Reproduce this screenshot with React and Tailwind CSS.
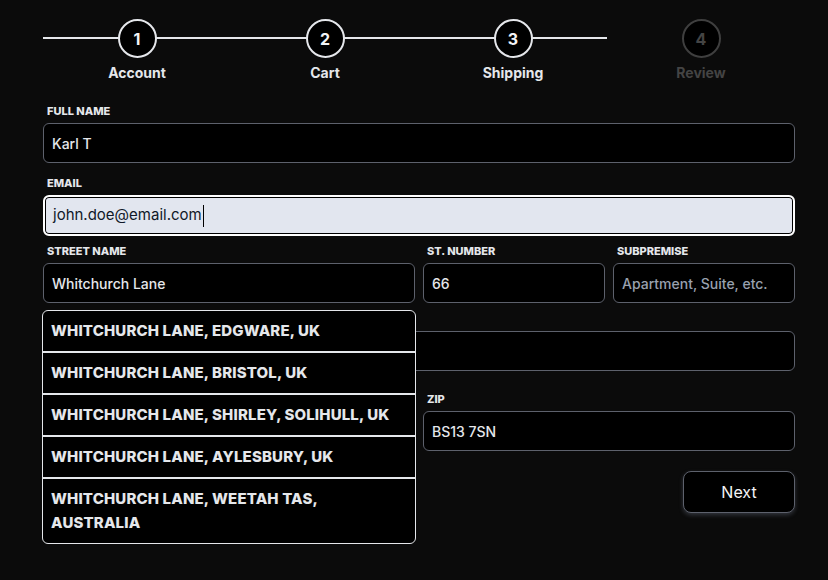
import React from "react";

const steps = [
  { n: 1, label: "Account", done: true },
  { n: 2, label: "Cart", done: true },
  { n: 3, label: "Shipping", done: true },
  { n: 4, label: "Review", done: false },
];

const suggestions = [
  "Whitchurch Lane, Edgware, UK",
  "Whitchurch Lane, Bristol, UK",
  "Whitchurch Lane, Shirley, Solihull, UK",
  "Whitchurch Lane, Aylesbury, UK",
  "Whitchurch Lane, Weetah TAS, Australia",
];

function Label({ children }) {
  return (
    <div className="text-[11px] leading-[14px] font-extrabold uppercase text-gray-200 pl-[4px] mb-[5px]">
      {children}
    </div>
  );
}

function Field({ value, placeholder }) {
  return (
    <div className="h-10 rounded-md border border-[#5d616c] bg-black flex items-center px-2 text-[14px] font-medium">
      {value ? (
        <span className="text-gray-200">{value}</span>
      ) : (
        <span className="text-gray-400">{placeholder}</span>
      )}
    </div>
  );
}

function Stepper() {
  return (
    <div className="grid grid-cols-4">
      {steps.map((s, i) => (
        <div key={s.n} className="flex flex-col items-center">
          <div className="relative w-full h-[39px] flex justify-center">
            {i < 3 ? (
              <div className="absolute left-0 right-0 top-[18px] h-[2px] bg-gray-200" />
            ) : null}
            <div
              className={`relative w-[39px] h-[39px] rounded-full border-2 bg-black flex items-center justify-center text-[16px] font-bold ${
                s.done ? "border-gray-200 text-gray-100" : "border-[#3f3f3f] text-[#444]"
              }`}
            >
              {s.n}
            </div>
          </div>
          <div
            className={`mt-[4px] text-[14px] font-bold ${
              s.done ? "text-gray-200" : "text-[#444]"
            }`}
          >
            {s.label}
          </div>
        </div>
      ))}
    </div>
  );
}

export default function App() {
  return (
    <div
      className="w-[828px] h-[580px] bg-[#0b0b0b] overflow-hidden"
      style={{ fontFamily: "Inter, 'Noto Sans', sans-serif" }}
    >
      <div className="ml-[43px] w-[752px] pt-[19px]">
        <Stepper />

        <div className="mt-[21px]">
          <Label>Full name</Label>
          <Field value="Karl T" />
        </div>

        <div className="mt-[13px]">
          <Label>Email</Label>
          <div className="h-[41px] rounded-md border-2 border-white bg-[#e2e6ef] shadow-[inset_0_0_0_1px_#000] flex items-center px-2 text-[15px] text-gray-900">
            john.doe@email.com
            <span className="inline-block w-[1px] h-[22px] bg-black ml-[1px]" />
          </div>
        </div>

        <div className="mt-[8px] grid grid-cols-[372px_182px_182px] gap-2">
          <div className="relative">
            <Label>Street name</Label>
            <Field value="Whitchurch Lane" />
            <div className="absolute left-[-1px] top-[66px] w-[374px] z-10 rounded-md border border-gray-200 bg-black overflow-hidden">
              {suggestions.map((s, i) => (
                <div
                  key={s}
                  className={`pl-2 pr-[20px] py-[8px] text-[15px] leading-[24px] tracking-[0.15px] font-extrabold uppercase text-gray-200 ${
                    i > 0 ? "border-t-2 border-gray-200" : ""
                  }`}
                >
                  {s}
                </div>
              ))}
            </div>
          </div>
          <div>
            <Label>St. number</Label>
            <Field value="66" />
          </div>
          <div>
            <Label>Subpremise</Label>
            <Field placeholder="Apartment, Suite, etc." />
          </div>
        </div>

        <div className="mt-[9px]">
          <Label>City</Label>
          <Field value="" placeholder="" />
        </div>

        <div className="mt-[21px] grid grid-cols-[372px_1fr] gap-2">
          <div>
            <Label>State</Label>
            <Field value="" placeholder="" />
          </div>
          <div>
            <Label>Zip</Label>
            <Field value="BS13 7SN" />
          </div>
        </div>

        <div className="mt-[20px] flex justify-end">
          <button className="w-[112px] h-[42px] rounded-lg border border-[#5d616c] bg-black text-gray-100 text-[16px] shadow-[0_2px_4px_rgba(120,130,150,0.35)]">
            Next
          </button>
        </div>
      </div>
    </div>
  );
}
